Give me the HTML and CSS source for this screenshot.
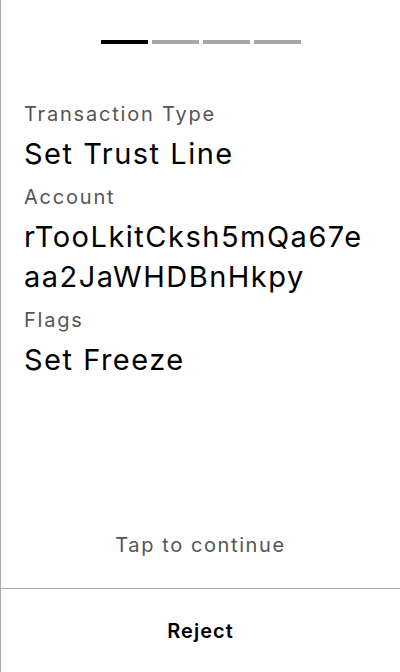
FILE: index.html
```html
<!DOCTYPE html>
<html>
<head>
<meta charset="utf-8">
<link rel="stylesheet" href="styles.css">
</head>
<body>
<div class="screen">
  <div class="progress">
    <span class="seg active"></span>
    <span class="seg"></span>
    <span class="seg"></span>
    <span class="seg"></span>
  </div>
  <div class="details">
    <div class="label">Transaction Type</div>
    <div class="value">Set Trust Line</div>
    <div class="label">Account</div>
    <div class="value">rTooLkitCksh5mQa67eaa2JaWHDBnHkpy</div>
    <div class="label">Flags</div>
    <div class="value">Set Freeze</div>
  </div>
  <div class="hint">Tap to continue</div>
  <div class="footer">
    <button class="reject">Reject</button>
  </div>
</div>
</body>
</html>
```
FILE: styles.css
```css
* { box-sizing: border-box; }
html, body { margin: 0; padding: 0; background: #fff; }
body { font-family: Inter, "Noto Sans", sans-serif; }
.screen {
  width: 400px;
  height: 672px;
  border-left: 1px solid #a8a8a8;
  display: flex;
  flex-direction: column;
}
.progress {
  display: flex;
  justify-content: center;
  gap: 4px;
  padding-top: 40px;
}
.seg {
  width: 47px;
  height: 4px;
  background: #a8a8a8;
}
.seg.active { background: #000; }
.details {
  padding: 50px 30px 0 23px;
  flex: 1;
}
.label {
  font-size: 20px;
  line-height: 40px;
  letter-spacing: 1.8px;
  color: #555;
}
.value {
  font-size: 29px;
  line-height: 40px;
  letter-spacing: 1.5px;
  color: #000;
  word-break: break-all;
  margin-bottom: 3px;
}
.hint {
  text-align: center;
  font-size: 20px;
  letter-spacing: 1.6px;
  color: #555;
  line-height: 24px;
  padding-bottom: 31px;
}
.footer {
  border-top: 1px solid #a8a8a8;
  height: 84px;
  display: flex;
  align-items: center;
  justify-content: center;
}
.reject {
  background: none;
  border: none;
  font-family: inherit;
  font-size: 20px;
  font-weight: 600;
  letter-spacing: 1px;
  color: #000;
  padding: 0;
}
```
